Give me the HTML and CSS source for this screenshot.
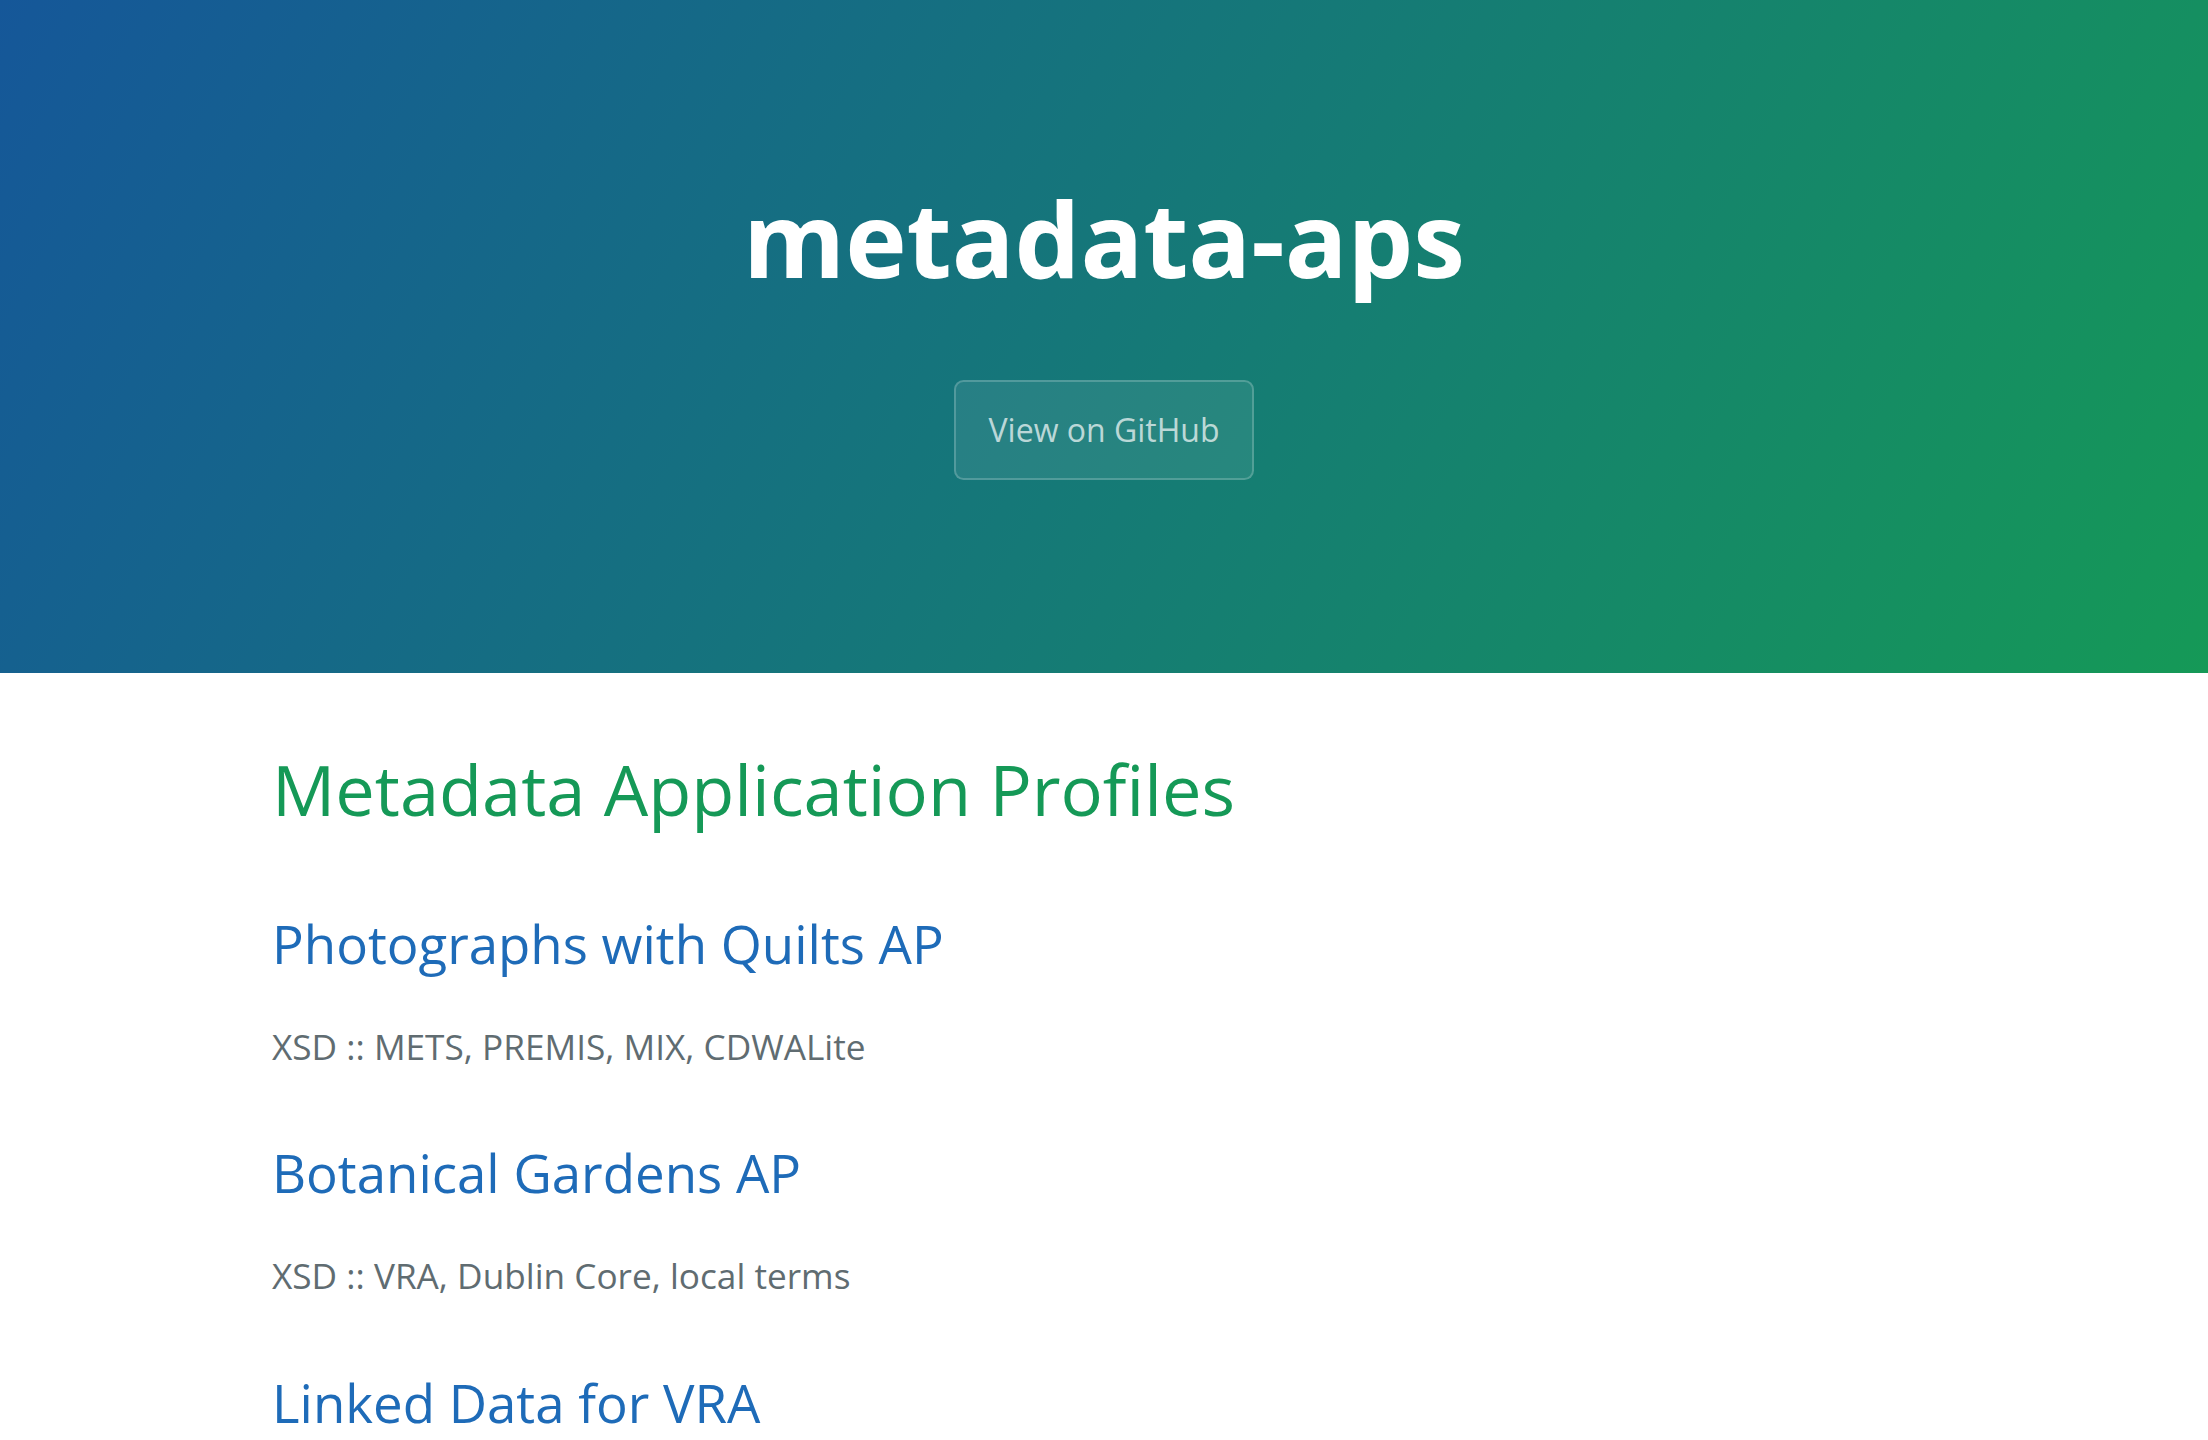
FILE: index.html
```html
<!DOCTYPE html>
<html lang="en">
<head>
<meta charset="utf-8">
<title>metadata-aps</title>
<link rel="stylesheet" href="styles.css">
</head>
<body>
<section class="page-header">
  <h1 class="project-name">metadata-aps</h1>
  <h2 class="project-tagline"></h2>
  <a class="btn" href="#">View on GitHub</a>
</section>
<section class="main-content">
  <h1 class="section-title">Metadata Application Profiles</h1>
  <h2 class="item-title"><a href="#">Photographs with Quilts AP</a></h2>
  <p class="item-text">XSD :: METS, PREMIS, MIX, CDWALite</p>
  <h2 class="item-title"><a href="#">Botanical Gardens AP</a></h2>
  <p class="item-text">XSD :: VRA, Dublin Core, local terms</p>
  <h2 class="item-title"><a href="#">Linked Data for VRA</a></h2>
  <p class="item-text">RDF :: VRA</p>
</section>
</body>
</html>
```
FILE: styles.css
```css
* { box-sizing: border-box; }
html, body { margin: 0; padding: 0; }
body {
  font-family: "Open Sans", "Helvetica Neue", Helvetica, Arial, sans-serif;
  font-size: 32px;
  line-height: 1.5;
  color: #606c71;
  background: #fff;
}
.page-header {
  color: #fff;
  text-align: center;
  background-color: #159957;
  background-image: linear-gradient(120deg, #155799, #159957);
  padding: 160px 192px 161px;
}
.project-name {
  margin: 0 0 4px 0;
  font-size: 104px;
  font-weight: 700;
  line-height: 1.5;
}
.project-tagline {
  margin: 0 0 64px 0;
  font-weight: normal;
  opacity: 0.7;
  font-size: 40px;
}
.btn {
  display: inline-block;
  margin-bottom: 32px;
  padding: 24px 33px;
  color: rgba(255, 255, 255, 0.7);
  background-color: rgba(255, 255, 255, 0.08);
  border: 2px solid rgba(255, 255, 255, 0.2);
  border-radius: 9.6px;
  text-decoration: none;
  font-size: 32px;
  line-height: 1.5;
}
.main-content {
  max-width: 2048px;
  margin: 0 auto;
  padding: 64px 192px;
  font-size: 35.2px;
  word-wrap: break-word;
}
.section-title {
  margin: 0 0 32px 0;
  font-size: 70.4px;
  font-weight: normal;
  color: #159957;
  line-height: 1.5;
}
.item-title {
  margin: 61px 0 32px 0;
  font-size: 52.8px;
  font-weight: normal;
  color: #159957;
  line-height: 1.5;
}
.item-title a {
  color: #1e6bb8;
  text-decoration: none;
}
.item-text {
  margin: 36.8px 0;
}
```
